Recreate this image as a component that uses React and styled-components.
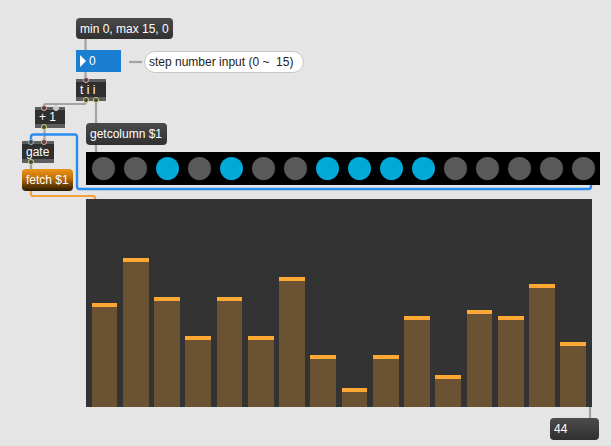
import React from "react";
import styled, { createGlobalStyle } from "styled-components";

const GlobalStyle = createGlobalStyle`
  body {
    margin: 0;
    background: #e5e5e5;
    font-family: "Liberation Sans", Arial, sans-serif;
  }
`;

const Canvas = styled.div`
  position: relative;
  width: 611px;
  height: 446px;
  overflow: hidden;
  background: #e5e5e5;
`;

// every patcher object sits at its own place on the canvas
const Node = styled.div`
  position: absolute;
  left: ${p => p.$x}px;
  top: ${p => p.$y}px;
  width: ${p => p.$w}px;
  height: ${p => p.$h || 22}px;
  box-sizing: border-box;
  font-size: 12px;
  color: #fff;
  white-space: pre;
`;

const Message = styled(Node)`
  display: flex;
  align-items: center;
  padding: 0 4px;
  border-radius: 4px;
  background: linear-gradient(#4a4a4a, #313131);
`;

const FetchMessage = styled(Message)`
  background: linear-gradient(#ec9414 0%, #c47208 40%, #5a3604 80%, #2a1802 100%);
`;

const ObjectBox = styled(Node)`
  display: flex;
  align-items: center;
  padding: 0 4px;
  background: #2f2f2f;
  border-top: 3px solid #5d5d5d;
  border-bottom: 4px solid #5d5d5d;
`;

const Port = styled.span`
  position: absolute;
  left: ${p => p.$at}px;
  ${p => (p.$out ? "bottom: -6px;" : "top: -5px;")}
  width: 6px;
  height: 6px;
  margin-left: -3px;
  box-sizing: border-box;
  border-radius: 50%;
  border: 1.3px solid ${p => p.$color || "#e6a8a4"};
  background: ${p => (p.$cold ? "#c9c9c9" : "#444")};
`;

const NumberBlue = styled(Node)`
  display: flex;
  align-items: center;
  padding-left: 4px;
  gap: 3px;
  background: #1a7fd2;
`;

const Arrow = styled.span`
  width: 0;
  height: 0;
  border-left: 6px solid #fff;
  border-top: 6px solid transparent;
  border-bottom: 6px solid transparent;
`;

const NumberDark = styled(Node)`
  display: flex;
  align-items: center;
  padding-left: 4px;
  border-radius: 4px;
  background: linear-gradient(#4c4c4c, #2f2f2f);
`;

const Comment = styled(Node)`
  display: flex;
  align-items: center;
  padding-left: 4px;
  border-radius: 11px;
  border: 1px solid #c6c6c6;
  background: #fff;
  color: #1e1e1e;
`;

const Matrix = styled(Node)`
  display: flex;
  align-items: center;
  gap: 9px;
  padding-left: 6px;
  background: #000;
`;

const Dot = styled.span`
  width: 23px;
  height: 23px;
  border-radius: 50%;
  background: ${p => (p.$on ? "#00a9d6" : "#595959")};
`;

const Slider = styled(Node)`
  display: flex;
  align-items: flex-end;
  gap: 5.6px;
  padding: 0 6px 0 5.7px;
  background: #333;
`;

const Bar = styled.div`
  flex: 1;
  box-sizing: border-box;
  background: #6a5233;
  border-top: 4px solid #ffa834;
`;

const Cords = styled.svg`
  position: absolute;
  left: 0;
  top: 0;
  pointer-events: none;
`;

const steps = [0, 0, 1, 0, 1, 0, 0, 1, 1, 1, 1, 0, 0, 0, 0, 0];
const levels = [104, 149, 110, 71, 110, 71, 130, 52, 19, 52, 91, 32, 97, 91, 123, 65];

export default function App() {
  return (
    <Canvas>
      <GlobalStyle />
      <Cords width="611" height="446">
        <g fill="none" stroke="#a3a3a3" strokeWidth="2.2">
          <path d="M85.5 39 V50" />
          <path d="M85.5 72 V79" />
          <path d="M86 101 V102 Q86 104 84 104 H46 Q44 104 44 106 V108" />
          <path d="M96 101 V123" />
          <path d="M44.5 128 V141" />
          <path d="M31 163 V169" />
          <path d="M96 145 V152" />
          <path d="M590 407 V418" />
          <path d="M129 62 H142" />
        </g>
        <path
          d="M31 191 V194 Q31 196 33 196 H93 Q95 196 95 198 V199"
          fill="none"
          stroke="#f4a035"
          strokeWidth="2.2"
        />
        <path
          d="M31 141 V137 Q31 134.5 33.5 134.5 H74.5 Q77 134.5 77 137 V186.5 Q77 189 79.5 189 H588.5 Q591 189 591 186.5 V185"
          fill="none"
          stroke="#2a8cf3"
          strokeWidth="2.4"
        />
      </Cords>

      <Message $x={76} $y={18} $w={97} $h={21}>min 0, max 15, 0</Message>

      <NumberBlue $x={76} $y={50} $w={45}>
        <Arrow />0
      </NumberBlue>
      <Comment $x={144} $y={51} $w={160}>step number input (0 ~  15)</Comment>

      <ObjectBox $x={76} $y={79} $w={30}>
        t i i
        <Port $at={10} />
        <Port $out $at={10} $color="#d8d47a" />
        <Port $out $at={20} $color="#d8d47a" />
      </ObjectBox>

      <ObjectBox $x={35} $y={107} $w={30} $h={21}>
        + 1
        <Port $at={9} />
        <Port $at={21} $cold $color="#d5d5d5" />
        <Port $out $at={9} $color="#d8d47a" />
      </ObjectBox>

      <Message $x={86} $y={123} $w={81}>getcolumn $1</Message>

      <ObjectBox $x={22} $y={141} $w={32}>
        gate
        <Port $at={9} $color="#8fc4da" />
        <Port $at={22} />
        <Port $out $at={9} $color="#d8d47a" />
      </ObjectBox>

      <FetchMessage $x={22} $y={169} $w={51}>fetch $1</FetchMessage>

      <Matrix $x={86} $y={152} $w={514} $h={33}>
        {steps.map((on, i) => (
          <Dot key={i} $on={on} />
        ))}
      </Matrix>

      <Slider $x={86} $y={199} $w={506} $h={208}>
        {levels.map((h, i) => (
          <Bar key={i} style={{ height: h }} />
        ))}
      </Slider>

      <NumberDark $x={550} $y={418} $w={49}>44</NumberDark>
    </Canvas>
  );
}
